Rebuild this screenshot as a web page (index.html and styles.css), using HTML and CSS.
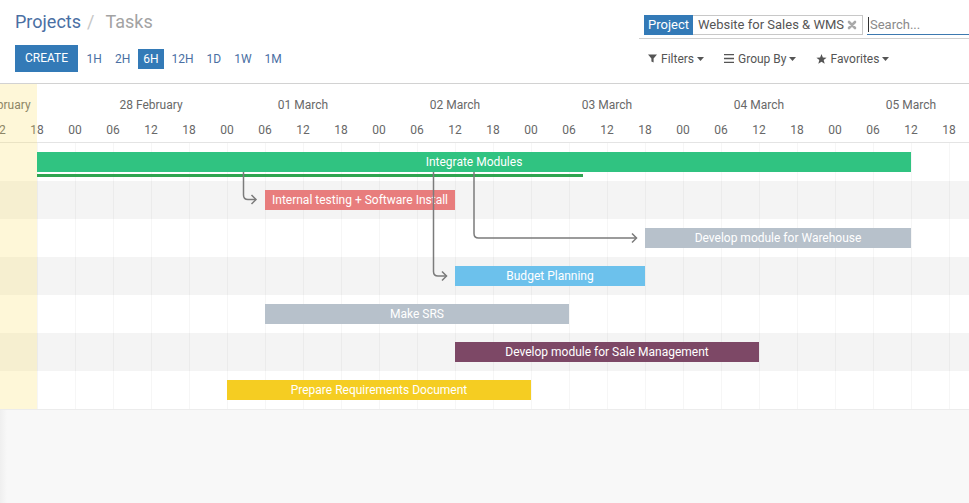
FILE: index.html
```html
<!DOCTYPE html>
<html lang="en">
<head>
<meta charset="utf-8">
<title>Projects / Tasks</title>
<link rel="stylesheet" href="styles.css">
</head>
<body>
<header class="cp">
  <div class="cp-left">
    <ol class="breadcrumb">
      <li class="crumb-link">Projects</li>
      <li class="crumb-sep">/</li>
      <li class="crumb-active">Tasks</li>
    </ol>
    <div class="cp-buttons">
      <button class="btn-create">CREATE</button>
      <div class="scales">
        <span class="scale">1H</span>
        <span class="scale">2H</span>
        <span class="scale active">6H</span>
        <span class="scale">12H</span>
        <span class="scale">1D</span>
        <span class="scale">1W</span>
        <span class="scale">1M</span>
      </div>
    </div>
  </div>
  <div class="cp-right">
    <div class="searchview">
      <div class="facet">
        <span class="facet-label">Project</span>
        <span class="facet-value">Website for Sales &amp; WMS
          <svg class="facet-remove" viewBox="0 0 10 10" width="10" height="10"><path d="M2 2L8 8M8 2L2 8" stroke="#a9a9a9" stroke-width="2.6" stroke-linecap="round"/></svg>
        </span>
      </div>
      <div class="search-input"><span class="caret-line"></span><span class="placeholder">Search...</span></div>
    </div>
    <div class="search-options">
      <span class="opt">
        <svg class="opt-icon" viewBox="0 0 9 9" width="9" height="9"><path d="M0 0.5H9L5.6 4.4V8.6L3.4 7.4V4.4Z" fill="#555"/></svg>
        <span>Filters</span>
        <svg class="opt-caret" viewBox="0 0 7 4" width="7" height="4"><path d="M0 0H7L3.5 4Z" fill="#555"/></svg>
      </span>
      <span class="opt">
        <svg class="opt-icon" viewBox="0 0 10 9" width="10" height="9"><path d="M0 0.5H10M0 4.5H10M0 8.5H10" stroke="#555" stroke-width="1.6"/></svg>
        <span>Group By</span>
        <svg class="opt-caret" viewBox="0 0 7 4" width="7" height="4"><path d="M0 0H7L3.5 4Z" fill="#555"/></svg>
      </span>
      <span class="opt">
        <svg class="opt-icon star" viewBox="0 0 12 11" width="11" height="10"><path d="M6 0L7.5 3.8L11.6 4.1L8.4 6.7L9.5 10.7L6 8.5L2.5 10.7L3.6 6.7L0.4 4.1L4.5 3.8Z" fill="#555"/></svg>
        <span>Favorites</span>
        <svg class="opt-caret" viewBox="0 0 7 4" width="7" height="4"><path d="M0 0H7L3.5 4Z" fill="#555"/></svg>
      </span>
    </div>
  </div>
</header>

<main class="gantt">
  <div class="scale-head">
    <div class="scale-row dates">
      <span class="date first">27 February</span>
      <span class="date">28 February</span>
      <span class="date">01 March</span>
      <span class="date">02 March</span>
      <span class="date">03 March</span>
      <span class="date">04 March</span>
      <span class="date">05 March</span>
    </div>
    <div class="scale-row hours">
      <span class="hour first">12</span>
      <span class="hour">18</span><span class="hour">00</span><span class="hour">06</span><span class="hour">12</span>
      <span class="hour">18</span><span class="hour">00</span><span class="hour">06</span><span class="hour">12</span>
      <span class="hour">18</span><span class="hour">00</span><span class="hour">06</span><span class="hour">12</span>
      <span class="hour">18</span><span class="hour">00</span><span class="hour">06</span><span class="hour">12</span>
      <span class="hour">18</span><span class="hour">00</span><span class="hour">06</span><span class="hour">12</span>
      <span class="hour">18</span><span class="hour">00</span><span class="hour">06</span><span class="hour">12</span>
      <span class="hour">18</span>
    </div>
  </div>

  <div class="rows">
    <div class="row">
      <div class="bar bar-green" style="margin-left:37px;width:874px">Integrate Modules</div>
      <div class="progress" style="margin-left:37px;width:546px"></div>
    </div>
    <div class="row alt">
      <div class="bar bar-red" style="margin-left:265px;width:190px">Internal testing + Software Install</div>
    </div>
    <div class="row">
      <div class="bar bar-grey" style="margin-left:645px;width:266px">Develop module for Warehouse</div>
    </div>
    <div class="row alt">
      <div class="bar bar-blue" style="margin-left:455px;width:190px">Budget Planning</div>
    </div>
    <div class="row">
      <div class="bar bar-grey" style="margin-left:265px;width:304px">Make SRS</div>
    </div>
    <div class="row alt">
      <div class="bar bar-purple" style="margin-left:455px;width:304px">Develop module for Sale Management</div>
    </div>
    <div class="row">
      <div class="bar bar-yellow" style="margin-left:227px;width:304px">Prepare Requirements Document</div>
    </div>
  </div>

  <div class="today"></div>

  <svg class="links" viewBox="0 84 969 325" width="969" height="325">
    <g fill="none" stroke="#7b7b7b" stroke-width="1.5">
      <path d="M243.5 172V195Q243.5 199.5 248 199.5H256"/>
      <path d="M251.5 195L256 199.5L251.5 204"/>
      <path d="M433.5 172V271.5Q433.5 276 438 276H446.5"/>
      <path d="M442 271.5L446.5 276L442 280.5"/>
      <path d="M474 172V233.5Q474 238 478.5 238H636.5"/>
      <path d="M632 233.5L636.5 238L632 242.5"/>
    </g>
  </svg>
</main>

<div class="gantt-empty"></div>
</body>
</html>
```

FILE: styles.css
```css
* {
  box-sizing: border-box;
  margin: 0;
  padding: 0;
}

html,
body {
  height: 100%;
}

body {
  font-family: Roboto, "Liberation Sans", sans-serif;
  font-size: 13px;
  color: #4c4c4c;
  background: #fff;
  display: flex;
  flex-direction: column;
  overflow: hidden;
}

/* ---------- control panel ---------- */
.cp {
  flex: none;
  height: 84px;
  border-bottom: 1px solid #d2d2d2;
  display: flex;
  justify-content: space-between;
}

.cp-left {
  padding: 10px 0 0 15px;
}

.breadcrumb {
  list-style: none;
  display: flex;
  font-size: 18px;
  line-height: 24px;
}

.crumb-link {
  color: #4a6fa3;
}

.crumb-sep {
  color: #c6c6c6;
  padding: 0 11px 0 6px;
}

.crumb-active {
  color: #a3a3a3;
}

.cp-buttons {
  display: flex;
  align-items: center;
  height: 27px;
  margin-top: 11px;
}

.btn-create {
  height: 27px;
  padding: 0 10px;
  border: none;
  background: #337ab7;
  color: #fff;
  font-family: Roboto, "Liberation Sans", sans-serif;
  font-size: 12px;
  line-height: 27px;
}

.scales {
  display: flex;
  gap: 3px;
  margin-left: 3.5px;
}

.scale {
  height: 20px;
  padding: 0 5px;
  font-size: 12px;
  line-height: 20px;
  color: #4a6fa3;
}

.scale.active {
  background: #337ab7;
  color: #fff;
}

.cp-right {
  width: 330px;
  display: flex;
  flex-direction: column;
}

.searchview {
  display: flex;
  margin-top: 15px;
  padding: 0 0 3px 5px;
  border-bottom: 1px solid #cfcfcf;
}

.facet {
  display: flex;
  height: 20px;
}

.facet-label {
  background: #337ab7;
  color: #fff;
  padding: 0 4px;
  line-height: 20px;
}

.facet-value {
  display: flex;
  align-items: center;
  gap: 3px;
  padding: 0 5px;
  border: 1px solid #c8c8c8;
  border-left: none;
  color: #555;
  line-height: 18px;
}

.facet-remove {
  display: block;
}

.search-input {
  flex: 1;
  height: 20px;
  margin-left: 4px;
  border-bottom: 1px solid #3d79b0;
  display: flex;
  align-items: center;
}

.caret-line {
  width: 1px;
  height: 15px;
  background: #333;
  margin: 0 1px 0 1px;
}

.placeholder {
  color: #8a8a8a;
  font-size: 13px;
}

.search-options {
  display: flex;
  align-items: center;
  height: 23px;
  margin-top: 8px;
  padding-left: 9px;
  font-size: 12px;
  color: #555;
}

.opt {
  display: flex;
  align-items: center;
  margin-right: 20px;
}

.opt-icon {
  display: block;
  margin-right: 4px;
}

.opt-icon.star {
  margin-right: 3px;
}

.opt-caret {
  display: block;
  margin-left: 3px;
}

/* ---------- gantt ---------- */
.gantt {
  flex: none;
  position: relative;
}

.scale-head {
  padding: 13px 0 4px;
  border-bottom: 1px solid #e4e4e4;
  color: #686868;
  font-size: 12px;
}

.scale-row {
  display: flex;
  overflow: hidden;
  white-space: nowrap;
  line-height: 16px;
}

.hours {
  margin-top: 9px;
}

.date {
  flex: none;
  width: 152px;
  text-align: center;
}

.date.first {
  margin-left: -77px;
}

.hour {
  flex: none;
  width: 38px;
  text-align: center;
}

.hour.first {
  margin-left: -20px;
}

.rows {
  display: flex;
  flex-direction: column;
}

.row {
  height: 38px;
  padding-top: 9px;
  background-color: #fff;
  background-image: linear-gradient(to right, rgba(0, 0, 0, 0.035) 1px, transparent 1px);
  background-size: 38px 100%;
  background-position: 37px 0;
  overflow: hidden;
}

.row.alt {
  background-color: #f4f4f4;
}

.bar {
  height: 20px;
  line-height: 20px;
  color: #fff;
  font-size: 12px;
  text-align: center;
  white-space: nowrap;
  overflow: hidden;
}

.bar-green { background: #30c381; }
.bar-red { background: #e87d7d; }
.bar-grey { background: #b7c1cb; }
.bar-blue { background: #6cc1ec; }
.bar-purple { background: #7d4866; }
.bar-yellow { background: #f5cd22; }

.progress {
  height: 3px;
  margin-top: 2px;
  background: #2fa450;
}

.today {
  position: absolute;
  left: 0;
  top: 0;
  width: 37px;
  height: 325px;
  background: rgba(250, 225, 100, 0.25);
  pointer-events: none;
}

.links {
  position: absolute;
  left: 0;
  top: 0;
  pointer-events: none;
}

.gantt-empty {
  flex: 1;
  border-top: 1px solid #ececec;
  background: linear-gradient(to right, #efefef 0, #f8f8f8 7px, #f8f8f8 100%);
}
```
